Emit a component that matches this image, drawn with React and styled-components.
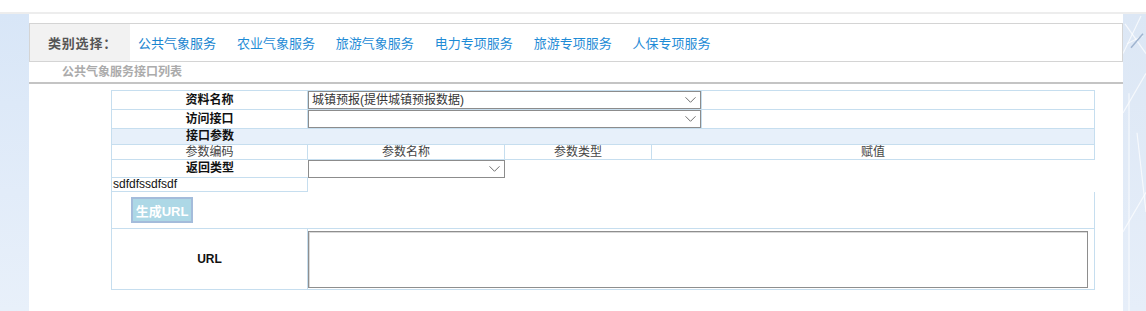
import React from "react";
import styled, { createGlobalStyle } from "styled-components";

const BORDER = "#c6deef";

const GlobalStyle = createGlobalStyle`
    html, body {
        margin: 0;
        padding: 0;
        background: #ffffff;
    }
    body {
        font-family: "Liberation Sans", "Noto Sans CJK SC", sans-serif;
        font-size: 12px;
        color: #111;
    }
`;

const Page = styled.div`
    min-height: 100vh;
    display: flex;
    flex-direction: column;
`;

const TopStrip = styled.div`
    height: 12px;
    border-bottom: 2px solid #ededed;
`;

const Body = styled.div`
    flex: 1;
    display: grid;
    grid-template-columns: 29px 1094px 1fr;
`;

const SideLeft = styled.div`
    background: linear-gradient(180deg, #d8e6f7 0%, #e2ecf9 60%, #e8f0fa 100%);
`;

const SideRight = styled.div`
    position: relative;
    overflow: hidden;
    background: linear-gradient(180deg, #dce7f5 0%, #e6eef9 100%);

    svg {
        position: absolute;
        inset: 0;
    }
`;

const Main = styled.main`
    background: #fff;
    padding-top: 9px;
`;

const CategoryBar = styled.div`
    display: flex;
    height: 39px;
    box-sizing: border-box;
    border: 1px solid #d4d4d4;
`;

const CategoryLabel = styled.div`
    display: flex;
    align-items: center;
    width: 100px;
    padding-left: 18px;
    box-sizing: border-box;
    background: #f2f2f2;
    font-size: 13px;
    font-weight: bold;
    color: #555;
    letter-spacing: 0.8px;
`;

const CategoryLinks = styled.nav`
    display: flex;
    align-items: center;
    gap: 20.9px;
    padding-left: 8px;
`;

const CategoryLink = styled.a`
    font-size: 13px;
    color: ${(p) => (p.$active ? "#1a86d0" : "#1e8bd6")};
    text-decoration: none;
    cursor: pointer;
`;

const SubTitle = styled.div`
    height: 20px;
    line-height: 20px;
    padding-left: 33px;
    border-bottom: 2px solid #c4c4c4;
    font-size: 12px;
    font-weight: bold;
    color: #ababab;
`;

const Table = styled.div`
    margin: 6px 0 0 82px;
    width: 983px;
    border-left: 1px solid ${BORDER};
    border-top: 1px solid ${BORDER};
`;

const Row = styled.div`
    display: grid;
    grid-template-columns: ${(p) => p.$cols};
    height: ${(p) => p.$h}px;
    border-right: 1px solid ${(p) => (p.$open ? "transparent" : BORDER)};
    border-bottom: ${(p) => (p.$line ? `1px solid ${BORDER}` : "none")};
    background: ${(p) => (p.$tint ? "#e7f0fa" : "transparent")};
`;

const Cell = styled.div`
    display: flex;
    align-items: ${(p) => p.$valign || "center"};
    justify-content: ${(p) => p.$align || "center"};
    box-sizing: border-box;
    min-width: 0;
    border-right: ${(p) => (p.$divide ? `1px solid ${BORDER}` : "none")};
    border-bottom: ${(p) => (p.$under ? `1px solid ${BORDER}` : "none")};
    font-size: 12px;
    line-height: 13px;
    font-weight: ${(p) => (p.$bold ? "bold" : "normal")};
    color: ${(p) => (p.$muted ? "#444" : "#111")};
`;

const PlainText = styled.span`
    padding-left: 1px;
    font-family: "Liberation Sans", Arial, sans-serif;
    font-size: 12px;
    color: #111;
`;

const SelectBox = styled.div`
    position: relative;
    width: ${(p) => p.$w || "100%"};
    height: 100%;

    svg {
        position: absolute;
        right: 5px;
        top: 50%;
        transform: translateY(-50%);
        pointer-events: none;
    }
`;

const Select = styled.select`
    appearance: none;
    width: 100%;
    height: 100%;
    box-sizing: border-box;
    margin: 0;
    padding: 0 18px 0 3px;
    border: 1px solid #8c8c8c;
    border-radius: 0;
    background: #fff;
    font-family: "Liberation Sans", "Noto Sans CJK SC", sans-serif;
    font-size: 12px;
    color: #333;
    outline: none;
`;

const GenerateButton = styled.button`
    width: 62px;
    height: 26px;
    margin: 5px 0 0 19px;
    padding: 0;
    box-sizing: border-box;
    border: 2px solid #a4bcdb;
    background: #add8e6;
    color: #fff;
    font-family: "Liberation Sans", "Noto Sans CJK SC", sans-serif;
    font-size: 13px;
    font-weight: bold;
    cursor: pointer;
`;

const TextAreaCell = styled.div`
    padding: 2px 6px 0 0;
`;

const UrlBox = styled.textarea`
    display: block;
    width: 100%;
    height: 57px;
    box-sizing: border-box;
    margin: 0;
    border: 1px solid #8e8e8e;
    box-shadow: inset 1px 1px 0 #d9d9d9;
    resize: none;
    outline: none;
`;

const Chevron = () => (
    <svg width="11" height="7" viewBox="0 0 11 7">
        <polyline
            points="0.5,0.8 5.5,5.8 10.5,0.8"
            fill="none"
            stroke="#6f6f6f"
            strokeWidth="1"
        />
    </svg>
);

const DropDown = ({ value, options = [], width }) => (
    <SelectBox $w={width}>
        <Select defaultValue={value}>
            {options.map((o) => (
                <option key={o}>{o}</option>
            ))}
        </Select>
        <Chevron />
    </SelectBox>
);

const CATEGORIES = [
    "公共气象服务",
    "农业气象服务",
    "旅游气象服务",
    "电力专项服务",
    "旅游专项服务",
    "人保专项服务",
];

const HEADERS = ["参数编码", "参数名称", "参数类型", "赋值"];

const App = () => {
    return (
        <>
            <GlobalStyle />
            <Page>
                <TopStrip />
                <Body>
                    <SideLeft />
                    <Main>
                        <CategoryBar>
                            <CategoryLabel>类别选择：</CategoryLabel>
                            <CategoryLinks>
                                {CATEGORIES.map((c, i) => (
                                    <CategoryLink key={c} $active={i === 0}>
                                        {c}
                                    </CategoryLink>
                                ))}
                            </CategoryLinks>
                        </CategoryBar>
                        <SubTitle>公共气象服务接口列表</SubTitle>

                        <Table>
                            <Row $cols="196px 394px 1fr" $h={18} $line>
                                <Cell $divide $bold>资料名称</Cell>
                                <Cell $divide>
                                    <DropDown
                                        value="城镇预报(提供城镇预报数据)"
                                        options={["城镇预报(提供城镇预报数据)"]}
                                    />
                                </Cell>
                                <Cell />
                            </Row>
                            <Row $cols="196px 394px 1fr" $h={18} $line>
                                <Cell $divide $bold>访问接口</Cell>
                                <Cell $divide>
                                    <DropDown options={[""]} />
                                </Cell>
                                <Cell />
                            </Row>
                            <Row $cols="196px 1fr" $h={15} $line $tint>
                                <Cell $bold>接口参数</Cell>
                                <Cell />
                            </Row>
                            <Row $cols="196px 197px 147px 1fr" $h={14} $line>
                                {HEADERS.map((h, i) => (
                                    <Cell key={h} $muted $divide={i < 3}>
                                        {h}
                                    </Cell>
                                ))}
                            </Row>
                            <Row $cols="196px 197px 1fr" $h={18} $open>
                                <Cell $bold $under>返回类型</Cell>
                                <Cell>
                                    <DropDown options={[""]} />
                                </Cell>
                                <Cell />
                            </Row>
                            <Row $cols="196px 1fr" $h={14} $open>
                                <Cell $align="flex-start" $divide $under>
                                    <PlainText>sdfdfssdfsdf</PlainText>
                                </Cell>
                                <Cell />
                            </Row>
                            <Row $cols="1fr" $h={36} $line>
                                <Cell $align="flex-start" $valign="flex-start">
                                    <GenerateButton>生成URL</GenerateButton>
                                </Cell>
                            </Row>
                            <Row $cols="196px 1fr" $h={60} $line>
                                <Cell $divide $bold>URL</Cell>
                                <TextAreaCell>
                                    <UrlBox />
                                </TextAreaCell>
                            </Row>
                        </Table>
                    </Main>
                    <SideRight>
                        <svg width="100%" height="100%" viewBox="0 0 23 300" preserveAspectRatio="none">
                            <g stroke="#ffffff" strokeOpacity="0.7" strokeWidth="1.2" fill="none">
                                <line x1="2" y1="10" x2="23" y2="40" />
                                <line x1="0" y1="40" x2="18" y2="2" />
                                <line x1="4" y1="30" x2="20" y2="22" />
                                <line x1="0" y1="100" x2="23" y2="60" />
                                <line x1="6" y1="80" x2="6" y2="300" />
                                <line x1="14" y1="120" x2="23" y2="200" />
                                <line x1="0" y1="220" x2="23" y2="180" />
                            </g>
                            <line x1="8" y1="34" x2="20" y2="20" stroke="#9fb4cf" strokeWidth="1.5" />
                        </svg>
                    </SideRight>
                </Body>
            </Page>
        </>
    );
};

export default App;
